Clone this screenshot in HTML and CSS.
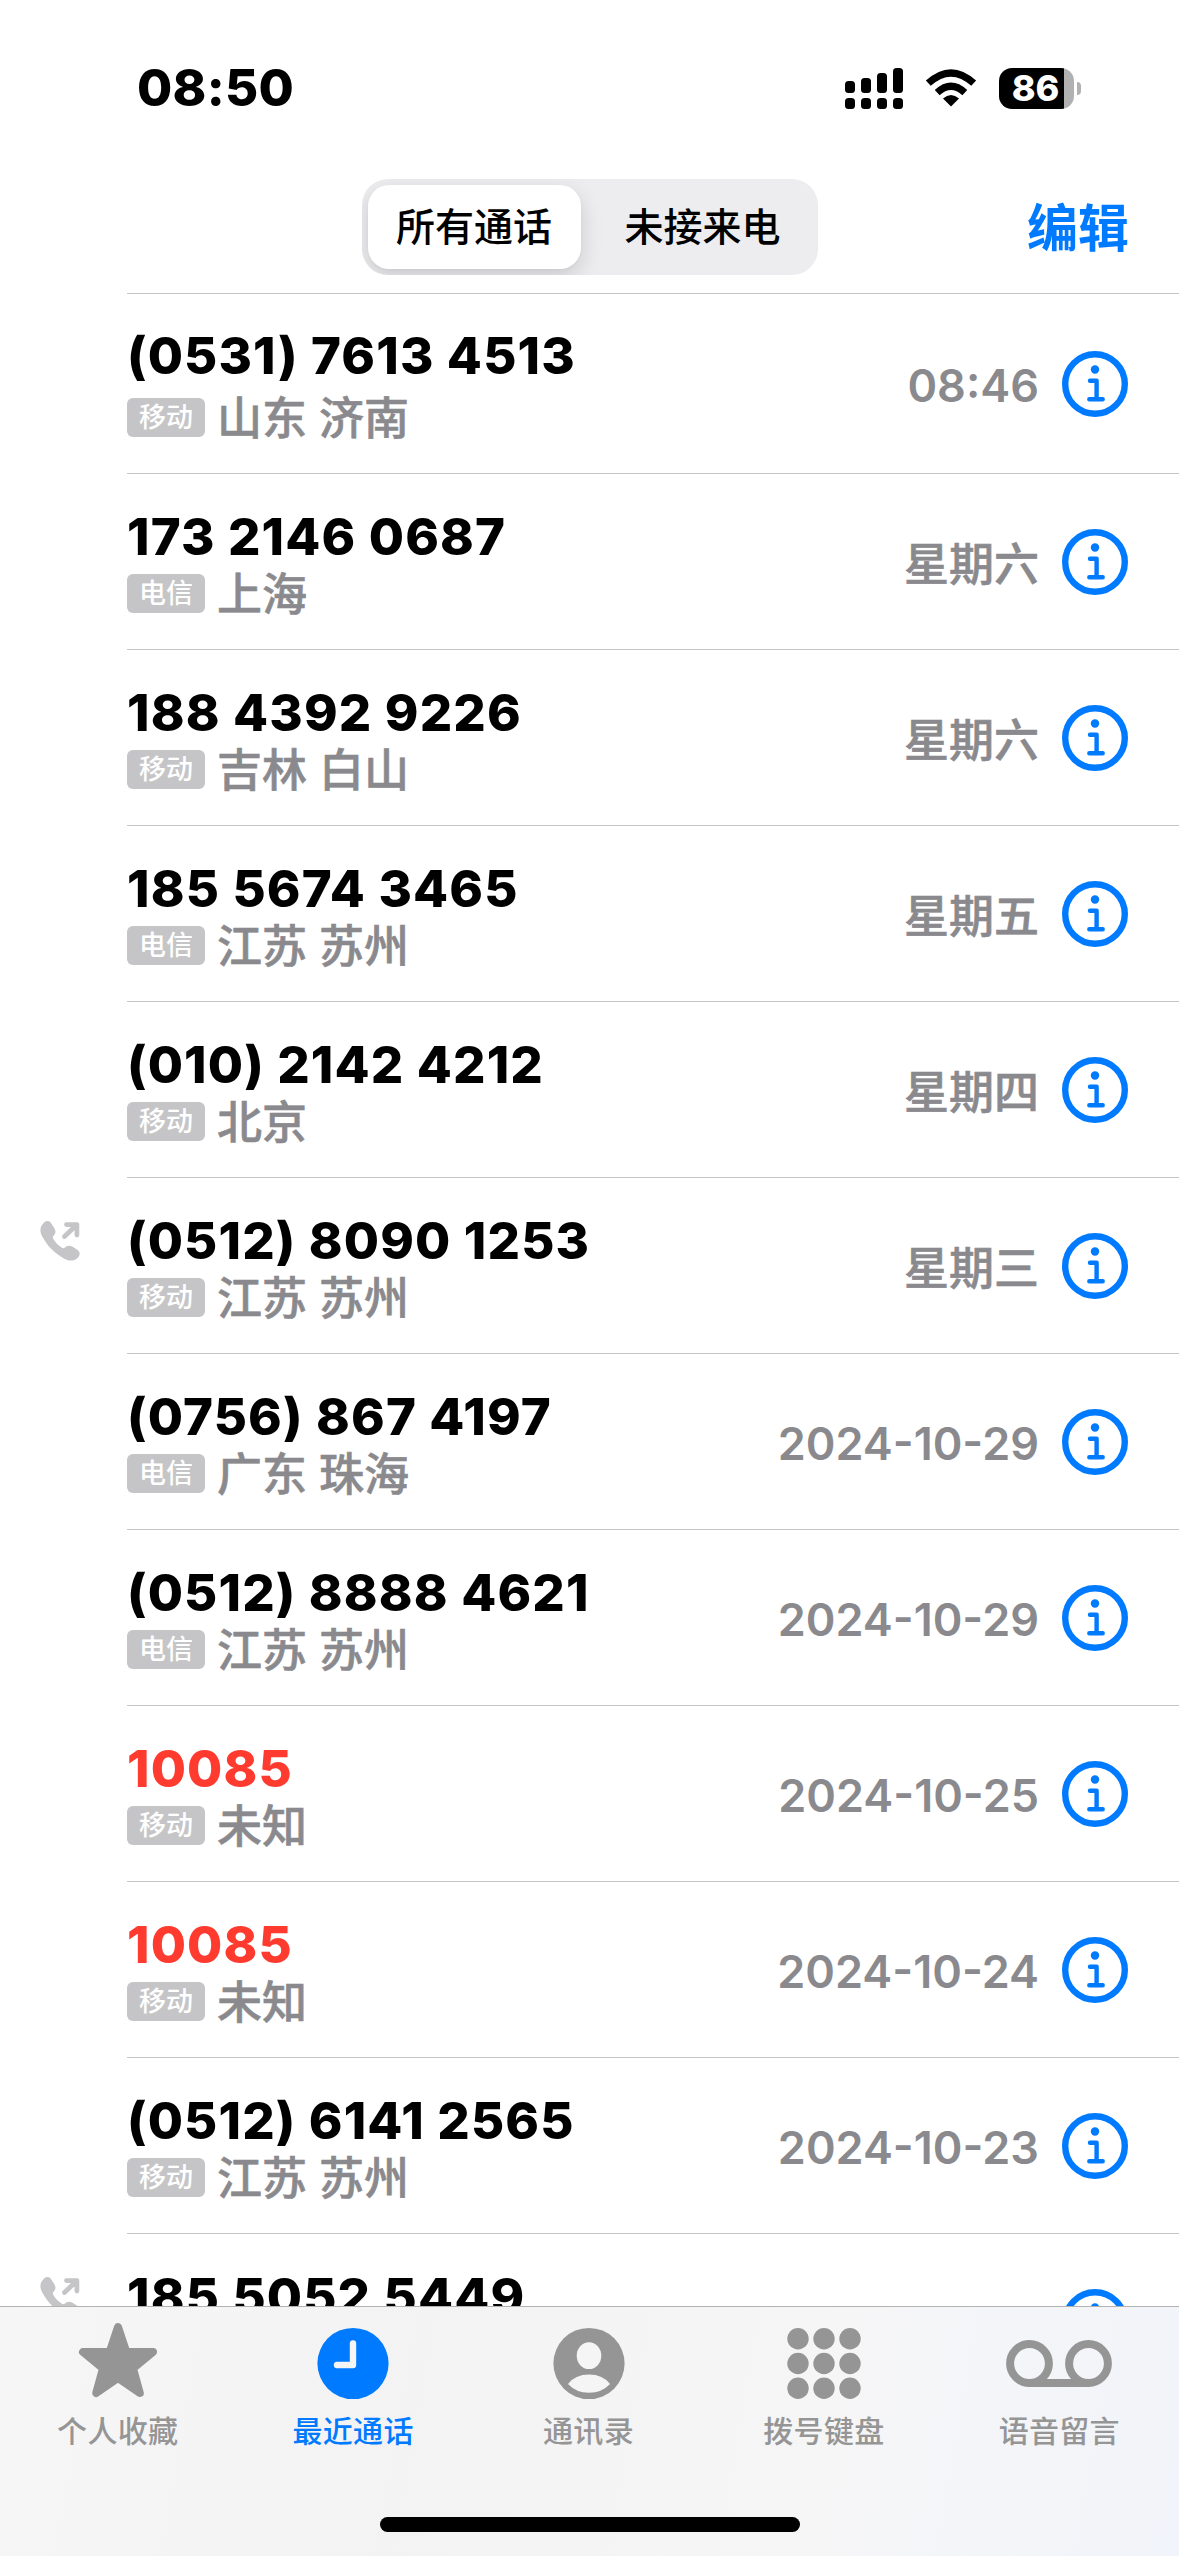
FILE: index.html
```html
<!DOCTYPE html>
<html lang="zh-CN">
<head>
<meta charset="utf-8">
<title>最近通话</title>
<link rel="stylesheet" href="styles.css">
</head>
<body>
<svg width="0" height="0" class="defs">
  <symbol id="info" viewBox="0 0 66 66"><circle cx="33" cy="33" r="29.8" fill="none" stroke="currentColor" stroke-width="6.4"/><circle cx="33" cy="18.500" r="4.200" fill="currentColor"/><path d="M28 29.700h6.600v18.600M27.300 48.300h13.400" fill="none" stroke="currentColor" stroke-width="4.400" stroke-linecap="round" stroke-linejoin="round"/></symbol>
  <symbol id="out" viewBox="0 0 40 40"><path d="M3.200 2.400C6-.6 9.200-.6 11.200 2.200L14.300 7.200C16.500 10.800 15.300 13.200 13.400 14.900C12.500 15.900 12.700 16.900 13.500 18.300C15.600 21.700 18.400 24.500 21.500 26.500C22.900 27.400 24 27.500 25 26.500C26.800 24.600 29.500 23.800 32.600 25.800L37.600 29.100C40.400 31.100 40.300 34.300 37.500 36.900C33.800 40.300 29.500 40.400 24.300 37.700C14.700 32.700 6.900 24.600 2.300 15.600C-.4 10.300-.3 6 3.200 2.400Z" fill="currentColor"/><path d="M24.500 15.500L36 4.500M26.500 3.600h10.400V14" fill="none" stroke="currentColor" stroke-width="4.800" stroke-linecap="round" stroke-linejoin="round"/></symbol>
</svg>
<div class="phone">
  <header class="status">
    <span class="clock">08:50</span>
    <div class="indicators">
      <svg width="58" height="41" viewBox="0 0 58 41"><rect y="13" width="10" height="12" rx="3.500"/><rect x="16" y="10" width="10" height="15" rx="3.500"/><rect x="32" y="5" width="10" height="20" rx="3.500"/><rect x="48" width="10" height="25" rx="3.500"/><rect y="30" width="10" height="11" rx="3.500"/><rect x="16" y="30" width="10" height="11" rx="3.500"/><rect x="32" y="30" width="10" height="11" rx="3.500"/><rect x="48" y="30" width="10" height="11" rx="3.500"/></svg>
      <svg class="wifi" width="52" height="38" viewBox="0 0 52 38"><path d="M26 37.500L18 29.500Q26 22.500 34 29.500Z"/><path d="M12.200 23.700Q26 11 39.800 23.700" fill="none" stroke="#000" stroke-width="7.200"/><path d="M3.300 14.200Q26-6.400 48.700 14.200" fill="none" stroke="#000" stroke-width="7.200"/></svg>
      <div class="battery"><span>86</span></div>
      <i class="nub"></i>
    </div>
  </header>
  <nav class="top">
    <div class="segments"><span class="segment on">所有通话</span><span class="segment">未接来电</span></div>
    <a class="edit">编辑</a>
  </nav>
  <main class="calls">
    <div class="call first"><div class="dir"></div><div class="body"><div class="who"><b>(0531) 7613 4513</b><p><i>移动</i>山东 济南</p></div><time>08:46</time><svg class="info"><use href="#info"/></svg></div></div>
    <div class="call"><div class="dir"></div><div class="body"><div class="who"><b>173 2146 0687</b><p><i>电信</i>上海</p></div><time class="day">星期六</time><svg class="info"><use href="#info"/></svg></div></div>
    <div class="call"><div class="dir"></div><div class="body"><div class="who"><b>188 4392 9226</b><p><i>移动</i>吉林 白山</p></div><time class="day">星期六</time><svg class="info"><use href="#info"/></svg></div></div>
    <div class="call"><div class="dir"></div><div class="body"><div class="who"><b>185 5674 3465</b><p><i>电信</i>江苏 苏州</p></div><time class="day">星期五</time><svg class="info"><use href="#info"/></svg></div></div>
    <div class="call"><div class="dir"></div><div class="body"><div class="who"><b>(010) 2142 4212</b><p><i>移动</i>北京</p></div><time class="day">星期四</time><svg class="info"><use href="#info"/></svg></div></div>
    <div class="call"><div class="dir"><svg><use href="#out"/></svg></div><div class="body"><div class="who"><b>(0512) 8090 1253</b><p><i>移动</i>江苏 苏州</p></div><time class="day">星期三</time><svg class="info"><use href="#info"/></svg></div></div>
    <div class="call"><div class="dir"></div><div class="body"><div class="who"><b>(0756) 867 4197</b><p><i>电信</i>广东 珠海</p></div><time>2024-10-29</time><svg class="info"><use href="#info"/></svg></div></div>
    <div class="call"><div class="dir"></div><div class="body"><div class="who"><b>(0512) 8888 4621</b><p><i>电信</i>江苏 苏州</p></div><time>2024-10-29</time><svg class="info"><use href="#info"/></svg></div></div>
    <div class="call missed"><div class="dir"></div><div class="body"><div class="who"><b>10085</b><p><i>移动</i>未知</p></div><time>2024-10-25</time><svg class="info"><use href="#info"/></svg></div></div>
    <div class="call missed"><div class="dir"></div><div class="body"><div class="who"><b>10085</b><p><i>移动</i>未知</p></div><time>2024-10-24</time><svg class="info"><use href="#info"/></svg></div></div>
    <div class="call"><div class="dir"></div><div class="body"><div class="who"><b>(0512) 6141 2565</b><p><i>移动</i>江苏 苏州</p></div><time>2024-10-23</time><svg class="info"><use href="#info"/></svg></div></div>
    <div class="call"><div class="dir"><svg><use href="#out"/></svg></div><div class="body"><div class="who"><b>185 5052 5449</b></div><svg class="info"><use href="#info"/></svg></div></div>
  </main>
  <footer class="dock">
    <div class="tabs">
      <a class="tab"><svg width="110" height="80" viewBox="0 0 110 80"><path d="M55 7L63.300 32H90L70 48.500L76.800 73L55 58L33.200 73L40 48.500L20 32H46.700Z" fill="currentColor" stroke="currentColor" stroke-width="8" stroke-linejoin="round"/></svg>个人收藏</a>
      <a class="tab active"><svg width="110" height="80" viewBox="0 0 110 80"><circle cx="55" cy="43.500" r="35.600" fill="currentColor"/><path d="M55 23.500v21.500H39" fill="none" stroke="#f5f5f5" stroke-width="6.400" stroke-linecap="round" stroke-linejoin="round"/></svg>最近通话</a>
      <a class="tab"><svg width="110" height="80" viewBox="0 0 110 80"><circle cx="55" cy="43.500" r="35.600" fill="currentColor"/><ellipse cx="55" cy="35.700" rx="12.300" ry="13.400" fill="#f5f5f5"/><path d="M34 64Q41 54.500 55 54.500T76 64Q68 72.700 55 72.700T34 64Z" fill="#f5f5f5"/></svg>通讯录</a>
      <a class="tab"><svg width="110" height="80" viewBox="0 0 110 80" fill="currentColor"><circle cx="29" cy="18.700" r="10.700"/><circle cx="55" cy="18.700" r="10.700"/><circle cx="81" cy="18.700" r="10.700"/><circle cx="29" cy="43.500" r="10.700"/><circle cx="55" cy="43.500" r="10.700"/><circle cx="81" cy="43.500" r="10.700"/><circle cx="29" cy="68.300" r="10.700"/><circle cx="55" cy="68.300" r="10.700"/><circle cx="81" cy="68.300" r="10.700"/></svg>拨号键盘</a>
      <a class="tab"><svg width="110" height="80" viewBox="0 0 110 80" fill="none" stroke="currentColor" stroke-width="8"><circle cx="25.500" cy="43.500" r="19.400"/><circle cx="84.500" cy="43.500" r="19.400"/><path d="M25.500 62.900h59"/></svg>语音留言</a>
    </div>
    <div class="home"></div>
  </footer>
</div>
</body>
</html>
```

FILE: styles.css
```css
* { box-sizing: border-box; }
body { margin: 0; background: #fff; font-family: Inter, "Noto Sans CJK SC", sans-serif; color: #000; }
.defs { position: absolute; }
svg { display: block; flex: none; }
.phone { width: 1179px; height: 2556px; display: flex; flex-direction: column; overflow: hidden; }

.status { height: 176px; display: flex; justify-content: space-between; align-items: center; padding: 0 98px 0 137px; }
.clock { font-size: 51px; font-weight: 800; line-height: 60px; letter-spacing: .3px; }
.indicators { display: flex; align-items: center; }
.wifi { margin: 0 22px; }
.battery { width: 75px; height: 41px; border-radius: 13px; background: linear-gradient(90deg, #000 65px, #b1b1b1 65px); color: #fff; font-size: 36px; font-weight: 800; line-height: 41px; padding-right: 2px; text-align: center; }
.nub { width: 4px; height: 13px; margin-left: 3px; background: #b1b1b1; border-radius: 0 5px 5px 0; }

.top { height: 117px; padding-top: 3px; display: grid; grid-template-columns: 1fr 456px 1fr; align-items: start; }
.segments { grid-column: 2; height: 96px; padding: 6px; display: flex; border-radius: 26px; background: #ededf0; overflow: hidden; }
.segment { flex: 1; padding-left: 13px; font-size: 39px; font-weight: 500; line-height: 84px; text-align: center; }
.segment.on { flex: 0 0 213px; padding-left: 0; background: #fff; border-radius: 21px; box-shadow: 0 8px 22px rgba(0,0,0,.15), 0 1px 3px rgba(0,0,0,.04); }
.edit { justify-self: end; margin-right: 50px; color: #007aff; font-size: 51px; font-weight: 700; line-height: 99px; }

.calls { flex: 1; min-height: 0; overflow: hidden; }
.call { height: 176px; display: flex; }
.call.first { height: 180px; }
.dir { width: 127px; padding: 44px 0 0 40px; color: #c5c5c7; }
.dir svg { width: 40px; height: 40px; }
.body { flex: 1; display: flex; align-items: center; border-top: 1px solid #c6c6c8; padding-right: 51px; }
.who { flex: 1; align-self: flex-start; padding-top: 33px; }
.who b { display: block; font-size: 51px; font-weight: 800; line-height: 60px; letter-spacing: 1.15px; white-space: pre; }
.who p { margin: -3px 0 0; display: flex; align-items: center; height: 55px; font-size: 45px; font-weight: 500; -webkit-text-stroke: .6px; color: #8a8a8e; white-space: pre; }
.first .who b { margin-top: -1px; }
.first .who p { margin-top: 2px; }
.who i { width: 78px; height: 39px; margin: 4px 12px 0 0; border-radius: 6px; background: #c5c5c7; color: #fff; font-size: 27px; font-style: normal; line-height: 39px; text-align: center; -webkit-text-stroke: 0; }
.missed b { color: #ff3b30; }
time { font-size: 45px; font-weight: 600; color: #8a8a8e; margin-right: 23px; padding-top: 4px; }
.day { font-weight: 500; -webkit-text-stroke: .6px; padding-top: 0; }
.info { width: 66px; height: 66px; color: #007aff; }

.dock { height: 250px; border-top: 1px solid #b2b2b2; background: linear-gradient(100deg, #f6f6f6 0%, #f3f3f4 35%, #f6f6f7 70%, #f1f4fa 100%); display: flex; flex-direction: column; align-items: center; }
.tabs { width: 100%; display: flex; padding: 13px 2px 0 0; }
.tab { flex: 1; display: flex; flex-direction: column; align-items: center; font-size: 30px; font-weight: 500; line-height: 40px; letter-spacing: .3px; color: #959595; }
.tab svg { margin-bottom: 11px; }
.tab.active { color: #007aff; }
.home { width: 420px; height: 15px; border-radius: 8px; background: #000; margin-top: 66px; }
```
